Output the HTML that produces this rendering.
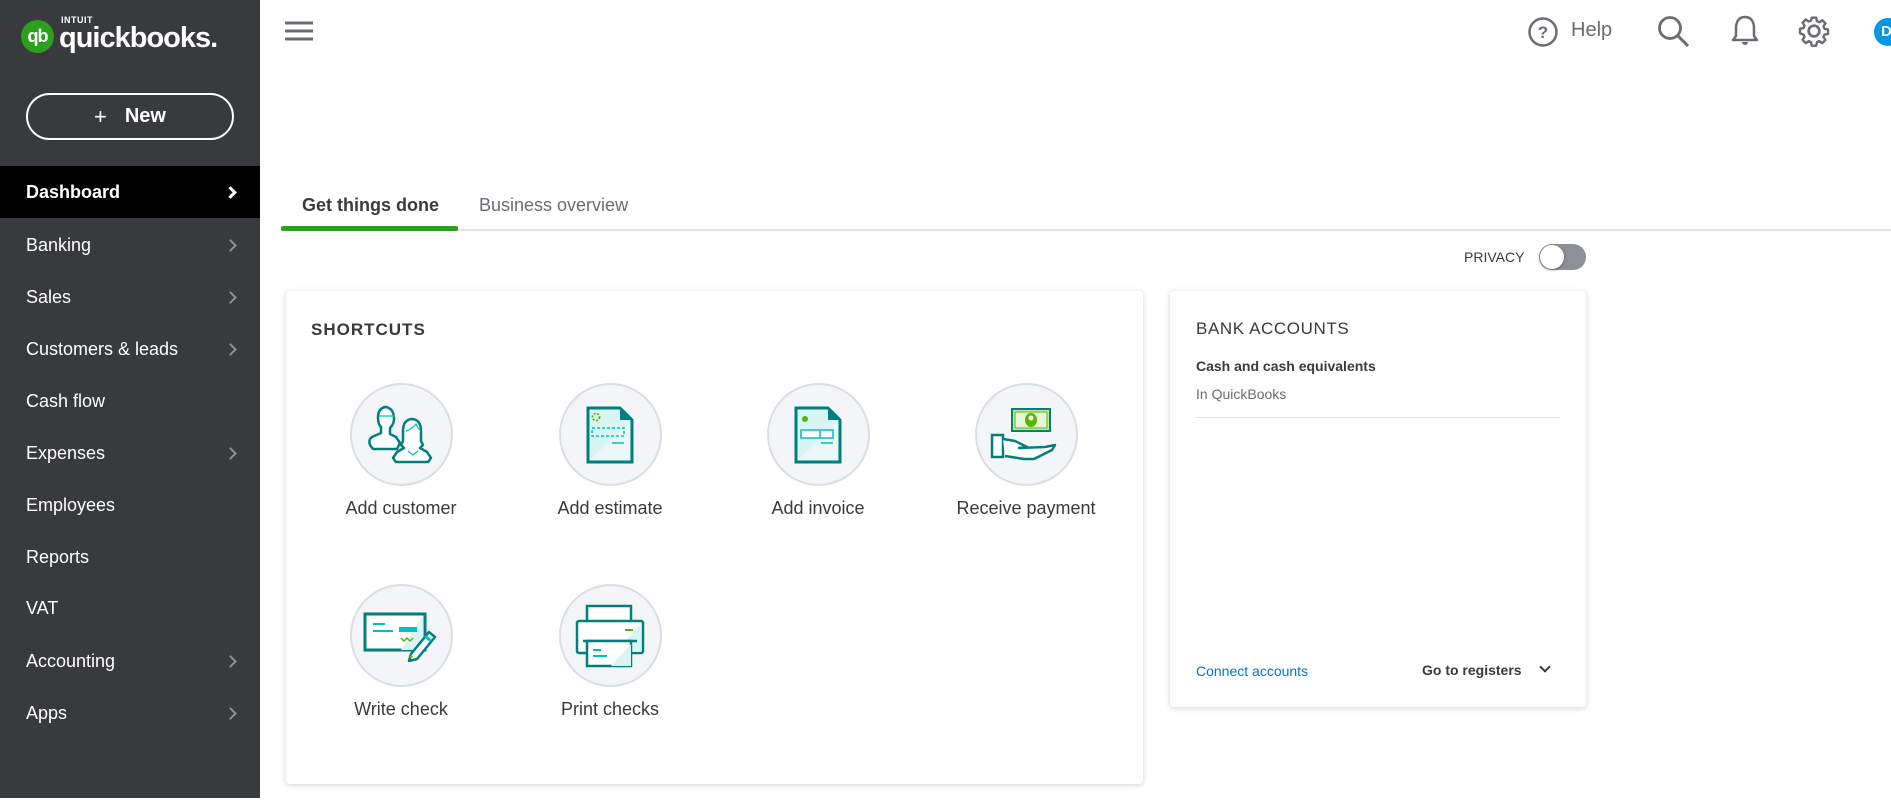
<!DOCTYPE html>
<html><head><meta charset="utf-8">
<style>
*{margin:0;padding:0;box-sizing:border-box}
body{width:1891px;height:806px;position:relative;overflow:hidden;background:#fff;font-family:"Liberation Sans",sans-serif;color:#393a3d}
.side{position:absolute;left:0;top:0;width:260px;height:798px;background:#393a3d}
.logo{position:absolute;left:21px;top:18px;display:flex;align-items:center}
.logo .c{width:33px;height:33px;border-radius:50%;background:#2ca01c;color:#fff;font-weight:bold;font-size:18px;display:flex;align-items:center;justify-content:center;letter-spacing:-1px}
.logo .t{color:#fff;margin-left:5px;position:relative}
.logo .t .i{position:absolute;left:2px;top:-3px;font-size:9px;font-weight:bold;letter-spacing:.5px}
.logo .t .q{font-size:29px;font-weight:bold;letter-spacing:-1px;display:block;margin-top:4px}
.new{position:absolute;left:26px;top:93px;width:208px;height:47px;border:2px solid #fff;border-radius:24px;color:#fff;font-size:20px;font-weight:bold;display:flex;align-items:center;justify-content:center}
.new span{font-weight:normal;margin-right:18px;font-size:22px}
.nav{position:absolute;left:0;width:260px;height:52px;display:flex;align-items:center;padding-left:26px;color:#fff;font-size:18px}
.nav.act{background:#000;font-weight:bold}
.nav .ch{position:absolute;left:226px;top:22px;width:9px;height:9px;border-right:2px solid #8d9096;border-top:2px solid #8d9096;transform:rotate(45deg)}
.nav.act .ch{border-color:#fff;border-width:3px}
.tab{position:absolute;top:195px;font-size:18px}
.card{position:absolute;background:#fff;border-radius:4px;box-shadow:0 1px 6px rgba(0,0,0,.18)}
.sc{position:absolute;width:180px;text-align:center;font-size:18px;color:#393a3d}
.sc .circ{width:103px;height:103px;border-radius:50%;background:#f4f5f8;border:2px solid #dcdde0;margin:0 auto 12px;display:flex;align-items:center;justify-content:center}
</style></head><body>
<div class="side">
  <div class="logo"><div class="c">qb</div><div class="t"><span class="i">INTUIT</span><span class="q">quickbooks.</span></div></div>
  <div class="new"><span>+</span>New</div>
  <div class="nav act" style="top:166px">Dashboard<i class="ch"></i></div>
  <div class="nav" style="top:219px">Banking<i class="ch"></i></div>
  <div class="nav" style="top:271px">Sales<i class="ch"></i></div>
  <div class="nav" style="top:323px">Customers &amp; leads<i class="ch"></i></div>
  <div class="nav" style="top:375px">Cash flow</div>
  <div class="nav" style="top:427px">Expenses<i class="ch"></i></div>
  <div class="nav" style="top:479px">Employees</div>
  <div class="nav" style="top:531px">Reports</div>
  <div class="nav" style="top:582px">VAT</div>
  <div class="nav" style="top:635px">Accounting<i class="ch"></i></div>
  <div class="nav" style="top:687px">Apps<i class="ch"></i></div>
</div>
<svg style="position:absolute;left:285px;top:21px" width="28" height="20"><g stroke="#6b6c72" stroke-width="3"><line x1="0" y1="2" x2="28" y2="2"/><line x1="0" y1="10" x2="28" y2="10"/><line x1="0" y1="18" x2="28" y2="18"/></g></svg>
<svg style="position:absolute;left:1527px;top:16px" width="32" height="32"><circle cx="16" cy="16" r="13.5" fill="none" stroke="#6b6c72" stroke-width="2.5"/><text x="16" y="22" text-anchor="middle" font-family="Liberation Sans" font-weight="bold" font-size="17" fill="#6b6c72">?</text></svg>
<div style="position:absolute;left:1571px;top:19px;font-size:20px;color:#6b6c72">Help</div>
<svg style="position:absolute;left:1657px;top:15px" width="34" height="34"><circle cx="13" cy="13" r="10.5" fill="none" stroke="#6b6c72" stroke-width="2.8"/><line x1="21" y1="21" x2="31" y2="31" stroke="#6b6c72" stroke-width="3"/></svg>
<svg style="position:absolute;left:1730px;top:14px" width="30" height="34"><path d="M15 3 C8 3 6 9 6 14 L6 22 L3 26 L27 26 L24 22 L24 14 C24 9 22 3 15 3Z" fill="none" stroke="#6b6c72" stroke-width="2.5" stroke-linejoin="round"/><path d="M12 28 a3 3 0 0 0 6 0" fill="#6b6c72"/></svg>
<svg style="position:absolute;left:1798px;top:15px" width="32" height="32" viewBox="0 0 24 24"><path d="M12 8a4 4 0 1 0 0 8a4 4 0 1 0 0-8z" fill="none" stroke="#6b6c72" stroke-width="2"/><path d="M10.3 2h3.4l.5 2.6 1.8.8 2.2-1.5 2.4 2.4-1.5 2.2.8 1.8 2.6.5v3.4l-2.6.5-.8 1.8 1.5 2.2-2.4 2.4-2.2-1.5-1.8.8-.5 2.6h-3.4l-.5-2.6-1.8-.8-2.200 1.5-2.4-2.4 1.5-2.2-.8-1.8L1.5 13.7v-3.4l2.6-.5.8-1.8-1.5-2.2 2.4-2.4 2.2 1.5 1.8-.8z" fill="none" stroke="#6b6c72" stroke-width="1.8" stroke-linejoin="round"/></svg>
<div style="position:absolute;left:1874px;top:18px;width:28px;height:28px;border-radius:50%;background:#0097e6;color:#fff;font-weight:bold;font-size:15px;line-height:28px;padding-left:7px">D</div>

<div class="tab" style="left:302px;font-weight:bold;color:#393a3d">Get things done</div>
<div class="tab" style="left:479px;color:#6b6c72">Business overview</div>
<div style="position:absolute;left:281px;top:229px;width:1610px;height:2px;background:#e3e4e8"></div>
<div style="position:absolute;left:281px;top:226px;width:177px;height:5px;background:#2ca01c;border-radius:2px"></div>

<div style="position:absolute;left:1464px;top:249px;font-size:14px;color:#393a3d">PRIVACY</div>
<div style="position:absolute;left:1539px;top:244px;width:47px;height:26px;border-radius:13px;background:#8d9096"></div>
<div style="position:absolute;left:1540px;top:245px;width:24px;height:24px;border-radius:50%;background:#fff;box-shadow:0 1px 3px rgba(0,0,0,.35)"></div>

<div class="card" style="left:286px;top:291px;width:857px;height:493px">
  <div style="position:absolute;left:25px;top:29px;font-size:17px;font-weight:bold;letter-spacing:1px;color:#393a3d">SHORTCUTS</div>
</div>
<!-- row1 -->
<div class="sc" style="left:311px;top:383px"><div class="circ">
<svg width="66" height="60" viewBox="0 0 66 60"><path d="M19 2 c-7 0 -9 5 -9 11 c0 4 1 7 3 9 v6 l-9 4 c-3 2 -3 5 -2 8 l3 4 h24 l3-6 l-4-6 l-6-3 v-6 c2-2 4-5 4-9 c0-7-3-12-10-12z" fill="#fff" stroke="#007f7c" stroke-width="2.5" stroke-linejoin="round"/><path d="M45 14 c-8 0 -10 6 -10 12 v10 l-2 4 l3 3 l-7 4 l-4 6 l3 4 h32 l3-4 l-4-6 l-7-4 l3-3 l-2-4 v-10 c0-6-2-12-10-12z" fill="#fff" stroke="#007f7c" stroke-width="2.5" stroke-linejoin="round"/><path d="M11 11 h16 M38 26 q6-2 10-7 q2 5 5 7 M40 46 l5 4 l5-4" stroke="#00c1bf" stroke-width="1.2" fill="none"/></svg></div>Add customer</div>
<div class="sc" style="left:520px;top:383px"><div class="circ">
<svg width="48" height="58" viewBox="0 0 48 58"><path d="M2 2 h32 l12 12 v42 h-44z" fill="#d9f5f3" stroke="#007f7c" stroke-width="3"/><path d="M4 54 L44 16 v38z" fill="#e9f9f8"/><path d="M34 2 l12 12 h-12z" fill="#007f7c"/><circle cx="10" cy="11" r="3.5" fill="none" stroke="#53b700" stroke-width="1.8" stroke-dasharray="2 1.5"/><rect x="6" y="22" width="32" height="8" fill="none" stroke="#00c1bf" stroke-width="1.5" stroke-dasharray="3 2"/><line x1="26" y1="37" x2="38" y2="37" stroke="#00c1bf" stroke-width="1.5"/></svg></div>Add estimate</div>
<div class="sc" style="left:728px;top:383px"><div class="circ">
<svg width="48" height="58" viewBox="0 0 48 58"><path d="M2 2 h32 l12 12 v42 h-44z" fill="#d9f5f3" stroke="#007f7c" stroke-width="3"/><path d="M4 54 L44 16 v38z" fill="#e9f9f8"/><path d="M34 2 l12 12 h-12z" fill="#007f7c"/><circle cx="11" cy="13" r="3" fill="#53b700"/><rect x="7" y="24" width="32" height="8" fill="#fff" stroke="#00c1bf" stroke-width="1.5"/><line x1="26" y1="24" x2="26" y2="32" stroke="#00c1bf" stroke-width="1.5"/><line x1="27" y1="37" x2="39" y2="37" stroke="#00c1bf" stroke-width="1.5"/></svg></div>Add invoice</div>
<div class="sc" style="left:936px;top:383px"><div class="circ">
<svg width="72" height="56" viewBox="0 0 72 56"><rect x="22" y="2" width="38" height="22" fill="#c8e7a8" stroke="#007f7c" stroke-width="2"/><rect x="25" y="5" width="32" height="16" fill="#e8f5d8" stroke="#53b700" stroke-width="1"/><ellipse cx="41" cy="13" rx="6" ry="7" fill="#53b700"/><circle cx="41" cy="11" r="2.5" fill="#fff"/><rect x="2" y="28" width="11" height="22" fill="#fff" stroke="#007f7c" stroke-width="2.5"/><path d="M13 32 l12 2 l12 6 l-8 1 l26-1 l10-2 l-3 5 l-18 9 h-10 l-19-3" fill="#fff" stroke="#007f7c" stroke-width="2.5" stroke-linejoin="round"/></svg></div>Receive payment</div>
<!-- row2 -->
<div class="sc" style="left:311px;top:584px"><div class="circ">
<svg width="76" height="52" viewBox="0 0 76 52"><rect x="2" y="4" width="60" height="36" fill="#fff" stroke="#007f7c" stroke-width="3"/><path d="M38 40 L60 6 v34z" fill="#d9f5f3"/><line x1="10" y1="14" x2="22" y2="14" stroke="#00c1bf" stroke-width="2"/><line x1="10" y1="21" x2="30" y2="21" stroke="#00c1bf" stroke-width="2"/><rect x="36" y="17" width="18" height="5" fill="#00c1bf"/><path d="M38 28 l3 3 l3-3 l3 3 l3-3" stroke="#53b700" stroke-width="1.5" fill="none"/><path d="M48 44 l18-22 l6 5 l-18 22 l-8 2z" fill="#fff" stroke="#007f7c" stroke-width="2.5" stroke-linejoin="round"/><path d="M62 26 l6 5" stroke="#00c1bf" stroke-width="3"/><path d="M46 48 l2-4 l2 3z" fill="#53b700"/></svg></div>Write check</div>
<div class="sc" style="left:520px;top:584px"><div class="circ">
<svg width="70" height="64" viewBox="0 0 70 64"><rect x="12" y="2" width="44" height="16" fill="#fff" stroke="#007f7c" stroke-width="2.5"/><rect x="2" y="17" width="66" height="32" rx="2" fill="#fff" stroke="#007f7c" stroke-width="2.5"/><path d="M40 48 L66 20 v28z" fill="#d9f5f3"/><line x1="50" y1="26" x2="58" y2="26" stroke="#53b700" stroke-width="2"/><line x1="8" y1="37" x2="62" y2="37" stroke="#007f7c" stroke-width="2.5"/><rect x="12" y="37" width="44" height="25" fill="#fff" stroke="#007f7c" stroke-width="2.5"/><path d="M36 62 L56 40 v22z" fill="#d9f5f3"/><line x1="18" y1="46" x2="26" y2="46" stroke="#00c1bf" stroke-width="2"/><line x1="18" y1="52" x2="32" y2="52" stroke="#00c1bf" stroke-width="2"/></svg></div>Print checks</div>

<div class="card" style="left:1170px;top:291px;width:416px;height:416px">
  <div style="position:absolute;left:26px;top:28px;font-size:17px;letter-spacing:.6px;color:#393a3d">BANK ACCOUNTS</div>
  <div style="position:absolute;left:26px;top:67px;font-size:14px;font-weight:bold;color:#393a3d">Cash and cash equivalents</div>
  <div style="position:absolute;left:26px;top:95px;font-size:14px;color:#6b6c72">In QuickBooks</div>
  <div style="position:absolute;left:26px;top:126px;width:364px;height:1px;background:#e3e4e8"></div>
  <div style="position:absolute;left:26px;top:372px;font-size:14px;color:#0077c5">Connect accounts</div>
  <div style="position:absolute;left:252px;top:371px;font-size:14px;font-weight:bold;color:#393a3d">Go to registers</div>
  <div style="position:absolute;left:371px;top:372px;width:8px;height:8px;border-right:2px solid #393a3d;border-bottom:2px solid #393a3d;transform:rotate(45deg)"></div>
</div>
</body></html>
